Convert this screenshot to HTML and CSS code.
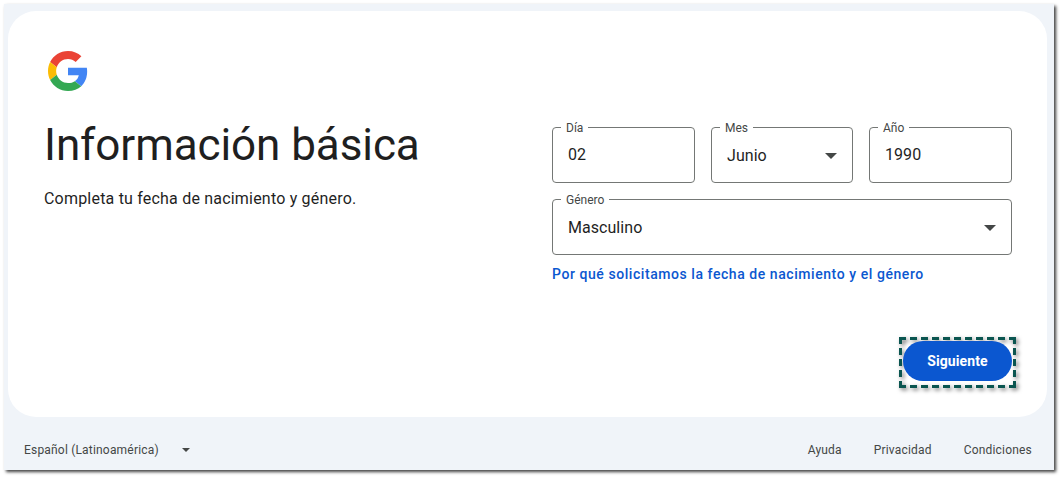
FILE: index.html
```html
<!DOCTYPE html>
<html lang="es">
<head>
<meta charset="utf-8">
<title>Información básica</title>
<link rel="stylesheet" href="styles.css">
</head>
<body>
<div class="frame">
  <main class="card">
    <svg class="logo" viewBox="0 0 48 48" aria-hidden="true">
      <path fill="#EA4335" d="M24 9.5c3.54 0 6.71 1.22 9.21 3.6l6.85-6.85C35.9 2.38 30.47 0 24 0 14.62 0 6.51 5.38 2.56 13.22l7.98 6.19C12.43 13.72 17.74 9.5 24 9.5z"/>
      <path fill="#4285F4" d="M46.98 24.55c0-1.57-.15-3.09-.38-4.55H24v9.02h12.94c-.58 2.96-2.26 5.48-4.78 7.18l7.73 6c4.51-4.18 7.09-10.36 7.09-17.65z"/>
      <path fill="#FBBC05" d="M10.53 28.59c-.48-1.45-.76-2.99-.76-4.59s.27-3.14.76-4.59l-7.98-6.19C.92 16.46 0 20.12 0 24c0 3.88.92 7.54 2.56 10.78l7.97-6.19z"/>
      <path fill="#34A853" d="M24 48c6.48 0 11.93-2.13 15.89-5.81l-7.73-6c-2.15 1.45-4.92 2.3-8.16 2.3-6.26 0-11.57-4.22-13.47-9.91l-7.98 6.19C6.51 42.62 14.62 48 24 48z"/>
    </svg>
    <div class="columns">
      <section class="intro">
        <h1 class="title">Información básica</h1>
        <p class="subtitle">Completa tu fecha de nacimiento y género.</p>
      </section>
      <form class="fields">
        <div class="row">
          <div class="field"><span class="label">Día</span><span class="value">02</span></div>
          <div class="field"><span class="label">Mes</span><span class="value value-select">Junio</span><span class="caret"></span></div>
          <div class="field"><span class="label">Año</span><span class="value">1990</span></div>
        </div>
        <div class="field"><span class="label">Género</span><span class="value value-select">Masculino</span><span class="caret"></span></div>
        <a class="why" href="#">Por qué solicitamos la fecha de nacimiento y el género</a>
      </form>
    </div>
    <div class="actions">
      <div class="focus-ring"><button class="next" type="button">Siguiente</button></div>
    </div>
  </main>
  <footer class="footer">
    <div class="lang">Español (Latinoamérica)<span class="caret-small"></span></div>
    <nav class="links"><a href="#">Ayuda</a><a href="#">Privacidad</a><a href="#">Condiciones</a></nav>
  </footer>
</div>
</body>
</html>
```
FILE: styles.css
```css
* { box-sizing: border-box; }
html, body { height: 100%; }
body { margin: 0; padding: 4px 0 0 4px; background: #fff; font-family: Roboto, "Liberation Sans", sans-serif; color: #1f1f1f; }
.frame { width: 1050px; height: 466px; padding: 7px 7px 0 4px; background: #f0f4f9; box-shadow: 2px 2px 3px rgba(0,0,0,.75); display: flex; flex-direction: column; }
.card { height: 406px; background: #fff; border-radius: 28px; padding: 40px 35px 0 36px; display: flex; flex-direction: column; }
.logo { width: 40px; height: 40px; margin-left: 4px; display: block; flex: none; }
.columns { display: flex; justify-content: space-between; margin-top: 28px; }
.intro { width: 480px; }
.title { margin: 0; font-size: 44px; line-height: 52px; font-weight: 400; letter-spacing: -.08px; }
.subtitle { margin: 17px 0 0; font-size: 16px; line-height: 22px; letter-spacing: .2px; }
.fields { width: 460px; margin-top: 8px; display: flex; flex-direction: column; gap: 16px; }
.row { display: grid; grid-template-columns: 143px 142px 143px; gap: 16px; }
.field { position: relative; height: 56px; border: 1px solid #747775; border-radius: 4px; padding-left: 15px; display: flex; align-items: center; justify-content: space-between; }
.label { position: absolute; left: 8px; top: -8px; padding: 0 5px; background: #fff; font-size: 12px; line-height: 16px; color: #444746; }
.value { font-size: 16px; line-height: 24px; letter-spacing: .05px; }
.value-select { position: relative; top: 1px; }
.caret { width: 0; height: 0; margin-right: 15px; margin-top: 2px; border-left: 6px solid transparent; border-right: 6px solid transparent; border-top: 6px solid #444746; }
.why { margin-top: -7px; font-size: 14px; line-height: 20px; font-weight: 500; letter-spacing: .56px; color: #0b57d0; text-decoration: none; }
.actions { display: flex; justify-content: flex-end; margin-top: 53px; margin-right: -4px; }
.focus-ring { position: relative; padding: 4px 4px 7px; height: 51px; }
.focus-ring::before {
  content: ""; position: absolute; inset: 0;
  background:
    repeating-linear-gradient(90deg, #0a5550 0 7px, transparent 7px 11px) left top / 100% 3px no-repeat,
    repeating-linear-gradient(90deg, #0a5550 0 7px, transparent 7px 11px) left bottom / 100% 3px no-repeat,
    repeating-linear-gradient(180deg, #0a5550 0 7px, transparent 7px 11px) left top / 3px 100% no-repeat,
    repeating-linear-gradient(180deg, #0a5550 0 7px, transparent 7px 11px) right top / 3px 100% no-repeat;
  filter: drop-shadow(2px 2px 2px rgba(0,0,0,.55));
}
.next { position: relative; display: block; width: 109px; height: 40px; border: 0; border-radius: 20px; background: #0b57d0; color: #fff; font: 700 14px/20px Roboto, sans-serif; letter-spacing: .1px; }
.footer { flex: 1; display: flex; justify-content: space-between; align-items: center; padding: 22px 15px 10px 16px; font-size: 12px; line-height: 16px; letter-spacing: .19px; color: #444746; }
.lang { display: flex; align-items: center; }
.caret-small { width: 0; height: 0; margin-left: 23px; border-left: 4px solid transparent; border-right: 4px solid transparent; border-top: 4px solid #444746; }
.links { display: flex; gap: 32px; }
.links a { color: #444746; text-decoration: none; }
```
